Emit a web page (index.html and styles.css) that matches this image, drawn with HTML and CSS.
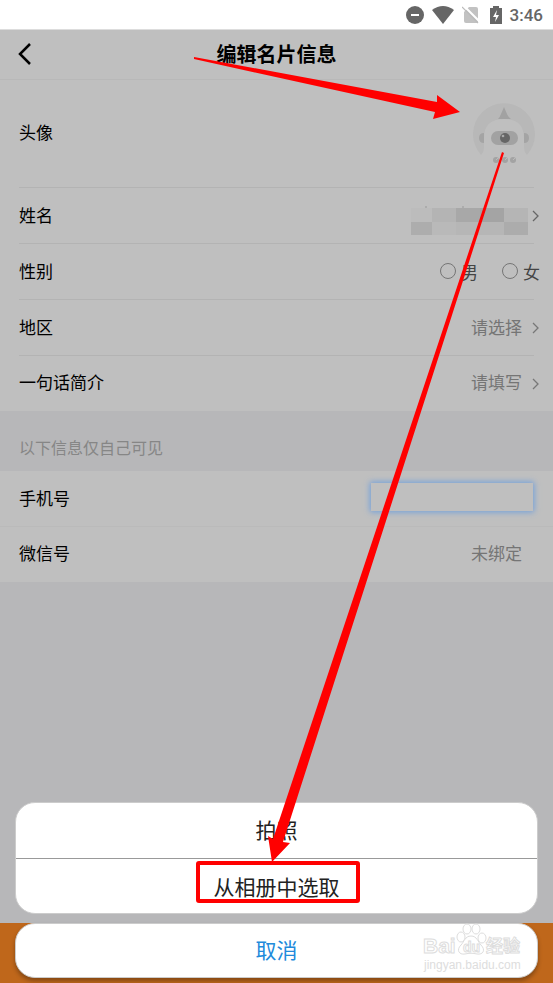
FILE: index.html
```html
<!DOCTYPE html>
<html lang="zh-CN">
<head>
    <meta charset="UTF-8">
    <meta name="viewport" content="width=device-width, initial-scale=1.0">
    <title>编辑名片信息</title>
    <link rel="stylesheet" href="styles.css">
</head>
<body>
    <div class="page">
        <div class="status-bar">
            <svg width="18" height="18" viewBox="0 0 18 18"><circle cx="9" cy="9" r="9" fill="#666"/><path d="M5 9h8" stroke="#fff" stroke-width="2"/></svg>
            <svg width="22" height="18" viewBox="0 0 22 18"><path d="M0 4Q11-4 22 4L11 18z" fill="#666"/></svg>
            <svg width="18" height="18" viewBox="0 0 18 18"><path d="M7 1h7q2 0 2 2v14H4q-2 0-2-2V6z" fill="#c2c2c2"/><path d="M2 0l16 16" stroke="#fff" stroke-width="2"/><path d="M0 1l16 16" stroke="#bbb" stroke-width="1.2"/></svg>
            <svg width="12" height="18" viewBox="0 0 12 18"><path d="M3 0h6v2h3v16H0V2h3z" fill="#666"/><path d="M7 4L3 11h3l-1 5 4-7H6z" fill="#fff"/></svg>
            <span class="time">3:46</span>
        </div>

        <header class="header">
            <button class="back" aria-label="返回">
                <svg width="14" height="24" viewBox="0 0 14 24"><path d="M12 2L2 12l10 10" fill="none" stroke="#000" stroke-width="2.5"/></svg>
            </button>
            <h1>编辑名片信息</h1>
        </header>

        <div class="list">
            <div class="row row-avatar">
                <span class="label">头像</span>
                <svg class="avatar" width="62" height="62" viewBox="0 0 62 62">
                    <path d="M8 52A31 31 0 1 1 54 52Q51 49 51 45V35Q51 16 31 16T11 35V45Q11 49 8 52z" fill="#b8b8b8"/>
                    <path d="M31 4l3 7q1 3 4 5H25q2-2 3-5z" fill="#a2a2a2"/>
                    <path d="M11 30q-5 0-5 5t5 5zM51 30q5 0 5 5t-5 5z" fill="#a4a4a4"/>
                    <rect x="18" y="28" width="27" height="14" rx="7" fill="#a2a2a2"/>
                    <circle cx="32" cy="35" r="5" fill="#666"/>
                    <circle cx="30" cy="33" r="1.3" fill="#aaa"/>
                    <g fill="#a3a3a3"><circle cx="23" cy="57" r="3"/><circle cx="32" cy="57" r="3"/><circle cx="40" cy="57" r="3"/></g>
                    <path d="M23 57l2-2M32 57l2-2M40 57l2-2" stroke="#bbb"/>
                </svg>
            </div>
            <a class="row" href="#name">
                <span class="label">姓名</span>
                <svg class="mosaic" width="117" height="29" viewBox="0 0 117 29">
                    <path d="M0 2h21v14H0z" fill="#bcbcbc"/><path d="M21 2h24v14H21z" fill="#b4b4b4"/>
                    <path d="M45 2h24v14H45z" fill="#a8a8a8"/><path d="M69 2h24v14H69z" fill="#a4a4a4"/>
                    <path d="M93 2h24v14H93z" fill="#b5b5b5"/><path d="M0 16h21v13H0z" fill="#adadad"/>
                    <path d="M21 16h24v13H21z" fill="#b9b9b9"/><path d="M45 16h48v13H45z" fill="#b6b6b6"/>
                    <path d="M93 16h24v13H93z" fill="#acacac"/><path d="M14 1h2M51 1h2" stroke="#999"/>
                </svg>
                <svg class="arrow" width="8" height="12" viewBox="0 0 8 12"><path d="M1 1l5 5-5 5"/></svg>
            </a>
            <div class="row">
                <span class="label">性别</span>
                <label class="option"><input type="radio" name="gender">男</label>
                <label class="option"><input type="radio" name="gender">女</label>
            </div>
            <a class="row" href="#area">
                <span class="label">地区</span>
                <span class="value">请选择</span>
                <svg class="arrow" width="8" height="12" viewBox="0 0 8 12"><path d="M1 1l5 5-5 5"/></svg>
            </a>
            <a class="row" href="#intro">
                <span class="label">一句话简介</span>
                <span class="value">请填写</span>
                <svg class="arrow" width="8" height="12" viewBox="0 0 8 12"><path d="M1 1l5 5-5 5"/></svg>
            </a>
        </div>

        <p class="tip">以下信息仅自己可见</p>

        <div class="list list-private">
            <div class="row">
                <label class="label" for="phone">手机号</label>
                <input class="phone" type="tel" id="phone">
            </div>
            <div class="row">
                <span class="label">微信号</span>
                <span class="value unbound">未绑定</span>
            </div>
        </div>
    </div>

    <div class="sheet">
        <div class="sheet-group">
            <button>拍照</button>
            <button>从相册中选取</button>
        </div>
        <button class="cancel">取消</button>
    </div>

    <svg class="watermark" width="104" height="50" viewBox="0 0 104 50">
        <g fill="#fff" stroke="#ddd">
            <text class="wm-name" x="1" y="30">Bai</text>
            <ellipse cx="39" cy="14" rx="4" ry="5"/><ellipse cx="45" cy="6" rx="4" ry="5"/>
            <ellipse cx="54" cy="6" rx="4" ry="5"/><ellipse cx="60" cy="15" rx="4" ry="5"/>
            <path d="M49 13c6 0 7 6 10 9 5 5 2 10-4 9-4-1-8-1-12 0-6 1-9-4-4-9 3-3 4-9 10-9z"/>
            <text class="wm-du" x="41" y="29">du</text>
            <text class="wm-cn" x="64" y="29">经验</text>
        </g>
        <text class="wm-url" x="2" y="46">jingyan.baidu.com</text>
    </svg>

    <svg class="marks" viewBox="0 0 553 983" preserveAspectRatio="none">
        <path d="M194 57L437 102V95L460 112L433 119L435 112L194 59z"/>
        <path d="M502 152L273 839L268 836L272 862L290 843L283 842L504 153z"/>
        <rect x="198" y="863" width="160" height="38" rx="1"/>
    </svg>
</body>
</html>
```
FILE: styles.css
```css
* {
    box-sizing: border-box;
}

body {
    margin: 0;
    min-height: 100vh;
    position: relative;
    font-family: Roboto, "Noto Sans CJK SC", sans-serif;
    font-size: 17px;
    color: #000;
    background-color: #bf671b;
}

button {
    font-family: inherit;
    border: 0;
    padding: 0;
    background: none;
}

svg {
    display: block;
    flex: none;
}

.page {
    min-height: calc(100vh - 60px);
    background-color: #b7b7b9;
}

.status-bar {
    height: 30px;
    padding: 0 10px;
    display: flex;
    align-items: center;
    justify-content: flex-end;
    gap: 8px;
    background-color: #fff;
    border-bottom: 1px solid #ddd;
}

.status-bar svg:nth-child(3) {
    margin-right: 2px;
}

.time {
    font-size: 17px;
    font-weight: 500;
    color: #666;
}

.header {
    height: 50px;
    display: grid;
    grid-template-columns: 40px 1fr 40px;
    align-items: center;
    background-color: #bfbfbf;
    border-bottom: 1px solid #b8b8b8;
}

.back {
    padding: 0 0 2px 18px;
}

.header h1 {
    margin: 0;
    font-size: 20px;
    line-height: 24px;
    font-weight: bold;
    text-align: center;
}

.list {
    background-color: #bfbfbf;
}

.row {
    height: 56px;
    padding: 0 13px 0 19px;
    display: flex;
    align-items: center;
    color: inherit;
    text-decoration: none;
    background: linear-gradient(#b3b3b3, #b3b3b3) 19px 100% / calc(100% - 38px) 1px no-repeat;
}

.row:last-child {
    height: 55px;
    background: none;
}

.row-avatar {
    height: 108px;
    padding-right: 18px;
}

.list-private .row:first-child {
    background-position: 0 100%;
    background-size: 100% 1px;
    background-image: linear-gradient(#bababa, #bababa);
}

.label,
.value {
    padding-bottom: 4px;
}

.label {
    margin-right: auto;
}

.row-avatar .label {
    padding-bottom: 6px;
}

.value {
    color: #757575;
}

.unbound {
    margin-right: 18px;
}

.arrow {
    margin-left: 10px;
    fill: none;
    stroke: #777;
    stroke-width: 1.3;
}

.mosaic {
    margin: 8px -6px 0 0;
}

.mosaic + .arrow {
    stroke: #666;
}

.option {
    display: flex;
    align-items: center;
    gap: 5px;
    margin-left: 24px;
    padding-bottom: 2px;
    color: #444;
}

.option input {
    appearance: none;
    width: 16px;
    height: 16px;
    margin: 0;
    border: 1px solid #757575;
    border-radius: 50%;
}

.phone {
    width: 162px;
    height: 28px;
    margin: 0 7px 4px 0;
    padding: 0 8px;
    border: 0;
    font-size: 17px;
    background-color: #bfbfbf;
    box-shadow: 0 0 6px 1px #6f9fdc;
}

.tip {
    margin: 0;
    padding: 26px 19px 10px;
    font-size: 16px;
    line-height: 24px;
    color: #868686;
}

.sheet {
    position: absolute;
    left: 15px;
    right: 15px;
    bottom: 5px;
    display: flex;
    flex-direction: column;
    gap: 9px;
}

.sheet-group,
.cancel {
    background-color: #fff;
    border: 1px solid #ccc;
    border-radius: 20px;
    overflow: hidden;
}

.sheet button {
    display: block;
    width: 100%;
    height: 55px;
    padding-bottom: 3px;
    font-size: 21px;
    color: #222;
}

.sheet-group button + button {
    padding-bottom: 0;
    border-top: 1px solid #999;
}

.sheet .cancel {
    color: #218adb;
    background-color: #fff;
    border: 1px solid #ccc;
    box-shadow: 0 3px 4px rgba(0, 0, 0, 0.3);
}

.watermark {
    position: absolute;
    right: 27px;
    bottom: 10px;
}

.watermark text {
    font-family: "Liberation Sans", "Noto Sans CJK SC", sans-serif;
    font-weight: bold;
}

.wm-name {
    font-size: 21px;
}

.wm-du {
    font-size: 14px;
}

.wm-cn {
    font-size: 17px;
}

.watermark .wm-url {
    font-size: 12px;
    font-weight: normal;
    fill: #ddd;
}

/* red pointers drawn over the screen */
.marks {
    position: absolute;
    top: 0;
    left: 0;
    width: 100%;
    height: 100%;
    fill: #f00;
    pointer-events: none;
}

.marks rect {
    fill: none;
    stroke: #f00;
    stroke-width: 4;
}
```
